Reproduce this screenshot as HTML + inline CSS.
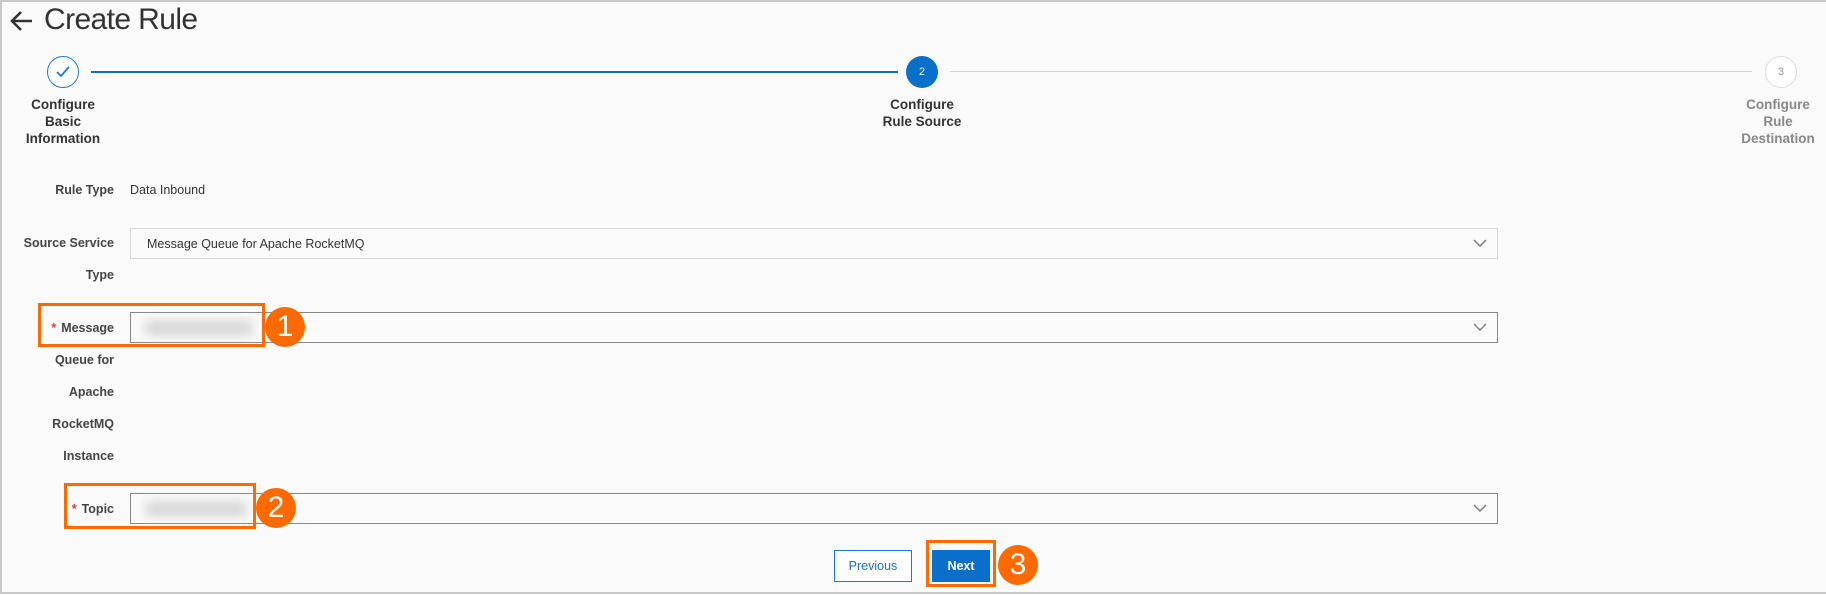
<!DOCTYPE html>
<html><head><meta charset="utf-8"><style>
*{margin:0;padding:0;box-sizing:border-box}
body{width:1826px;height:595px;background:#fafafa;font-family:"Liberation Sans",sans-serif;position:relative;overflow:hidden;color:#333}
.frame{position:absolute;left:0;top:0;width:1826px;height:594px;border:2px solid #c8c8c8;border-right:none}
.abs{position:absolute}
.title{left:44px;top:3px;font-size:30px;color:#333;letter-spacing:-0.6px}
.circ{position:absolute;width:32px;height:32px;border-radius:50%;text-align:center;line-height:30px;font-size:11px}
.sl{position:absolute;width:140px;text-align:center;font-weight:bold;font-size:13.5px;line-height:17px;color:#333}
.lbl{position:absolute;right:calc(1826px - 114px);font-weight:bold;font-size:12.5px;color:#444;text-align:right;white-space:nowrap}
.sel{position:absolute;left:130px;width:1368px;height:31px;border:1px solid #d6d6d6;background:#fbfbfb}
.sel.dark{border-color:#888}
.chev{position:absolute;right:10px;top:9px}
.blur{position:absolute;background:#d8d8d8;filter:blur(5px);border-radius:4px}
.obox{position:absolute;border:3px solid #ff6a00}
.badge{position:absolute;width:40px;height:40px;border-radius:50%;background:#ff6a00;color:#fff;font-size:30px;text-align:center;line-height:40px}
.ast{color:#e33;margin-right:5px}
</style></head><body>
<div class="frame"></div>
<svg class="abs" style="left:10px;top:10px" width="24" height="22" viewBox="0 0 24 22"><path d="M22 11H3M11 2L2 11l9 9" stroke="#333" stroke-width="2.6" fill="none"/></svg>
<div class="abs title">Create Rule</div>

<div class="abs" style="left:91px;top:71px;width:807px;height:1.5px;background:#0a6fcb"></div>
<div class="abs" style="left:950px;top:71px;width:802px;height:1px;background:#d5d5d5"></div>
<div class="circ" style="left:47px;top:56px;border:1.5px solid #1a79d2;background:#fff"><svg width="16" height="14" viewBox="0 0 16 14" style="margin-top:8px"><path d="M2 7l4 4 8-9" stroke="#1a79d2" stroke-width="1.8" fill="none"/></svg></div>
<div class="circ" style="left:906px;top:56px;background:#0a6fcb;color:#fff;line-height:32px">2</div>
<div class="circ" style="left:1765px;top:56px;border:1.5px solid #ddd;background:#fff;color:#999">3</div>
<div class="sl" style="left:-7px;top:96px">Configure<br>Basic<br>Information</div>
<div class="sl" style="left:852px;top:96px">Configure<br>Rule Source</div>
<div class="sl" style="left:1708px;top:96px;color:#888">Configure<br>Rule<br>Destination</div>

<div class="lbl" style="top:183px">Rule Type</div>
<div class="abs" style="left:130px;top:183px;font-size:12.5px;color:#333">Data Inbound</div>

<div class="lbl" style="top:236px">Source Service</div>
<div class="lbl" style="top:268px">Type</div>
<div class="sel" style="top:228px"><span class="abs" style="left:16px;top:8px;font-size:12.5px;color:#333">Message Queue for Apache RocketMQ</span><svg class="chev" width="14" height="10" viewBox="0 0 14 10"><path d="M1 2l6 6 6-6" stroke="#777" stroke-width="1.4" fill="none"/></svg></div>

<div class="lbl" style="top:321px"><span class="ast">*</span>Message</div>
<div class="lbl" style="top:353px">Queue for</div>
<div class="lbl" style="top:385px">Apache</div>
<div class="lbl" style="top:417px">RocketMQ</div>
<div class="lbl" style="top:449px">Instance</div>
<div class="sel dark" style="top:312px"><svg class="chev" width="14" height="10" viewBox="0 0 14 10"><path d="M1 2l6 6 6-6" stroke="#777" stroke-width="1.4" fill="none"/></svg></div>
<div class="blur" style="left:145px;top:320px;width:108px;height:16px"></div>
<div class="obox" style="left:38px;top:303px;width:227px;height:44px"></div>
<div class="badge" style="left:265px;top:307px">1</div>

<div class="lbl" style="top:502px"><span class="ast">*</span>Topic</div>
<div class="sel dark" style="top:493px"><svg class="chev" width="14" height="10" viewBox="0 0 14 10"><path d="M1 2l6 6 6-6" stroke="#777" stroke-width="1.4" fill="none"/></svg></div>
<div class="blur" style="left:145px;top:501px;width:102px;height:16px"></div>
<div class="obox" style="left:64px;top:483px;width:192px;height:46px"></div>
<div class="badge" style="left:256px;top:488px">2</div>

<div class="abs" style="left:834px;top:550px;width:78px;height:32px;border:1px solid #1a79d2;background:#fff;color:#1a6fbb;font-size:12.5px;text-align:center;line-height:30px">Previous</div>
<div class="abs" style="left:932px;top:550px;width:58px;height:32px;background:#0a6fcb;color:#fff;font-size:12.5px;text-align:center;line-height:32px;font-weight:bold">Next</div>
<div class="obox" style="left:926px;top:540px;width:70px;height:47px"></div>
<div class="badge" style="left:998px;top:545px">3</div>
</body></html>
